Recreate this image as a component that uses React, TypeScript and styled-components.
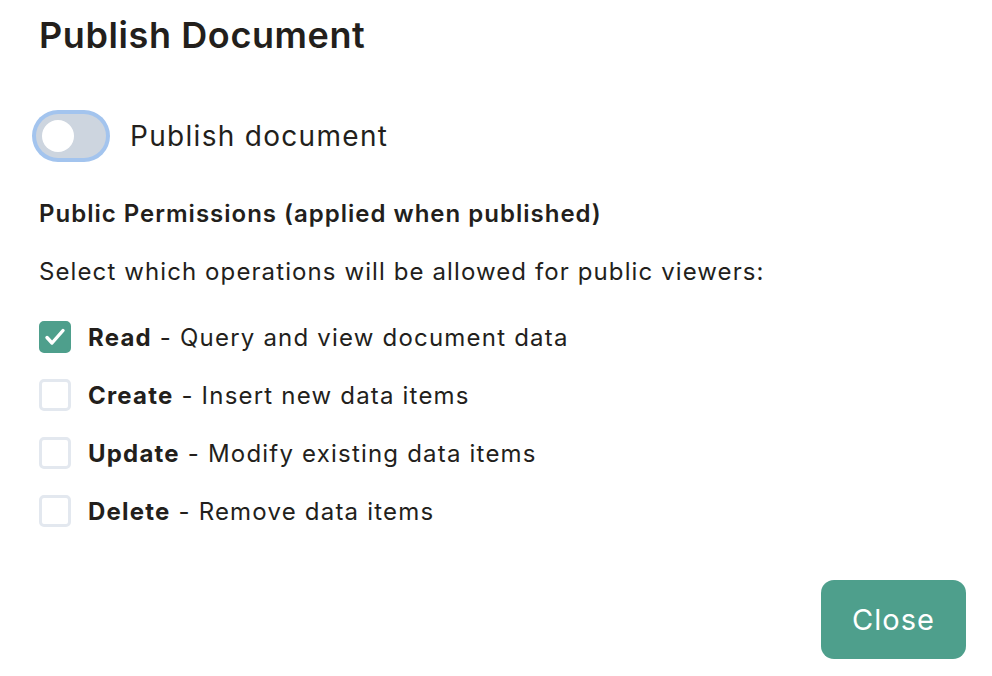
import { useState } from "react";
import styled, { createGlobalStyle } from "styled-components";

const GlobalStyle = createGlobalStyle`
  html, body {
    margin: 0;
    padding: 0;
    background: #ffffff;
  }
  body {
    font-family: Inter, "Liberation Sans", sans-serif;
    color: #231f1c;
    letter-spacing: 1.1px;
  }
`;

const Dialog = styled.div`
  width: 992px;
  height: 676px;
  box-sizing: border-box;
  padding: 13px 26px 0 39px;
  display: flex;
  flex-direction: column;
`;

const Title = styled.h1`
  margin: 0;
  font-size: 36px;
  line-height: 44px;
  font-weight: 600;
  letter-spacing: 0.6px;
  color: #231f1c;
`;

const ToggleRow = styled.label`
  margin-top: 57px;
  display: flex;
  align-items: center;
  gap: 24px;
  cursor: pointer;
`;

const Track = styled.span<{ $on: boolean }>`
  position: relative;
  width: 70px;
  height: 44px;
  border-radius: 22px;
  background: ${(p) => (p.$on ? "#4e9f8c" : "#cdd5df")};
  box-shadow: 0 0 0 4px #a3c4ee;
  margin-left: -3px;
  flex-shrink: 0;
`;

const Knob = styled.span<{ $on: boolean }>`
  position: absolute;
  top: 6px;
  left: ${(p) => (p.$on ? "32px" : "6px")};
  width: 32px;
  height: 32px;
  border-radius: 50%;
  background: #ffffff;
`;

const ToggleText = styled.span`
  font-size: 28px;
  letter-spacing: 1.3px;
  color: #231f1c;
`;

const SectionHeading = styled.h2`
  margin: 39px 0 0;
  font-size: 24px;
  line-height: 34px;
  font-weight: 600;
  letter-spacing: 1px;
`;

const Hint = styled.p`
  margin: 24px 0 0;
  font-size: 24px;
  line-height: 34px;
`;

const OptionList = styled.div`
  margin-top: 32px;
  display: flex;
  flex-direction: column;
  gap: 26px;
`;

const Option = styled.label`
  display: flex;
  align-items: center;
  gap: 17px;
  height: 32px;
  font-size: 24px;
  letter-spacing: 1.2px;
  cursor: pointer;

  b {
    font-weight: 700;
  }
`;

const Box = styled.span<{ $checked: boolean }>`
  width: 32px;
  height: 32px;
  box-sizing: border-box;
  border-radius: 5px;
  border: 3px solid ${(p) => (p.$checked ? "#4e9f8c" : "#e3e8ef")};
  background: ${(p) => (p.$checked ? "#4e9f8c" : "#ffffff")};
  display: flex;
  align-items: center;
  justify-content: center;
  flex-shrink: 0;
`;

const Footer = styled.div`
  margin-top: auto;
  margin-bottom: 17px;
  display: flex;
  justify-content: flex-end;
`;

const CloseButton = styled.button`
  width: 145px;
  height: 79px;
  border: none;
  border-radius: 13px;
  background: #4e9f8c;
  color: #ffffff;
  font-family: inherit;
  font-size: 29px;
  letter-spacing: 1px;
  cursor: pointer;
`;

const options = [
  { key: "read", name: "Read", desc: "Query and view document data" },
  { key: "create", name: "Create", desc: "Insert new data items" },
  { key: "update", name: "Update", desc: "Modify existing data items" },
  { key: "delete", name: "Delete", desc: "Remove data items" },
];

export default function App() {
  const [published, setPublished] = useState(false);
  const [perms, setPerms] = useState<Record<string, boolean>>({ read: true });

  return (
    <>
      <GlobalStyle />
      <Dialog>
        <Title>Publish Document</Title>
        <ToggleRow onClick={() => setPublished(!published)}>
          <Track $on={published}>
            <Knob $on={published} />
          </Track>
          <ToggleText>Publish document</ToggleText>
        </ToggleRow>
        <SectionHeading>Public Permissions (applied when published)</SectionHeading>
        <Hint>Select which operations will be allowed for public viewers:</Hint>
        <OptionList>
          {options.map((o) => (
            <Option
              key={o.key}
              onClick={() => setPerms({ ...perms, [o.key]: !perms[o.key] })}
            >
              <Box $checked={!!perms[o.key]}>
                {perms[o.key] && (
                  <svg width="22" height="22" viewBox="0 0 22 22" fill="none">
                    <path
                      d="M3 11.5l5 5.5L19 4.5"
                      stroke="#ffffff"
                      strokeWidth="3.4"
                      strokeLinecap="round"
                      strokeLinejoin="round"
                    />
                  </svg>
                )}
              </Box>
              <span>
                <b>{o.name}</b> - {o.desc}
              </span>
            </Option>
          ))}
        </OptionList>
        <Footer>
          <CloseButton>Close</CloseButton>
        </Footer>
      </Dialog>
    </>
  );
}
